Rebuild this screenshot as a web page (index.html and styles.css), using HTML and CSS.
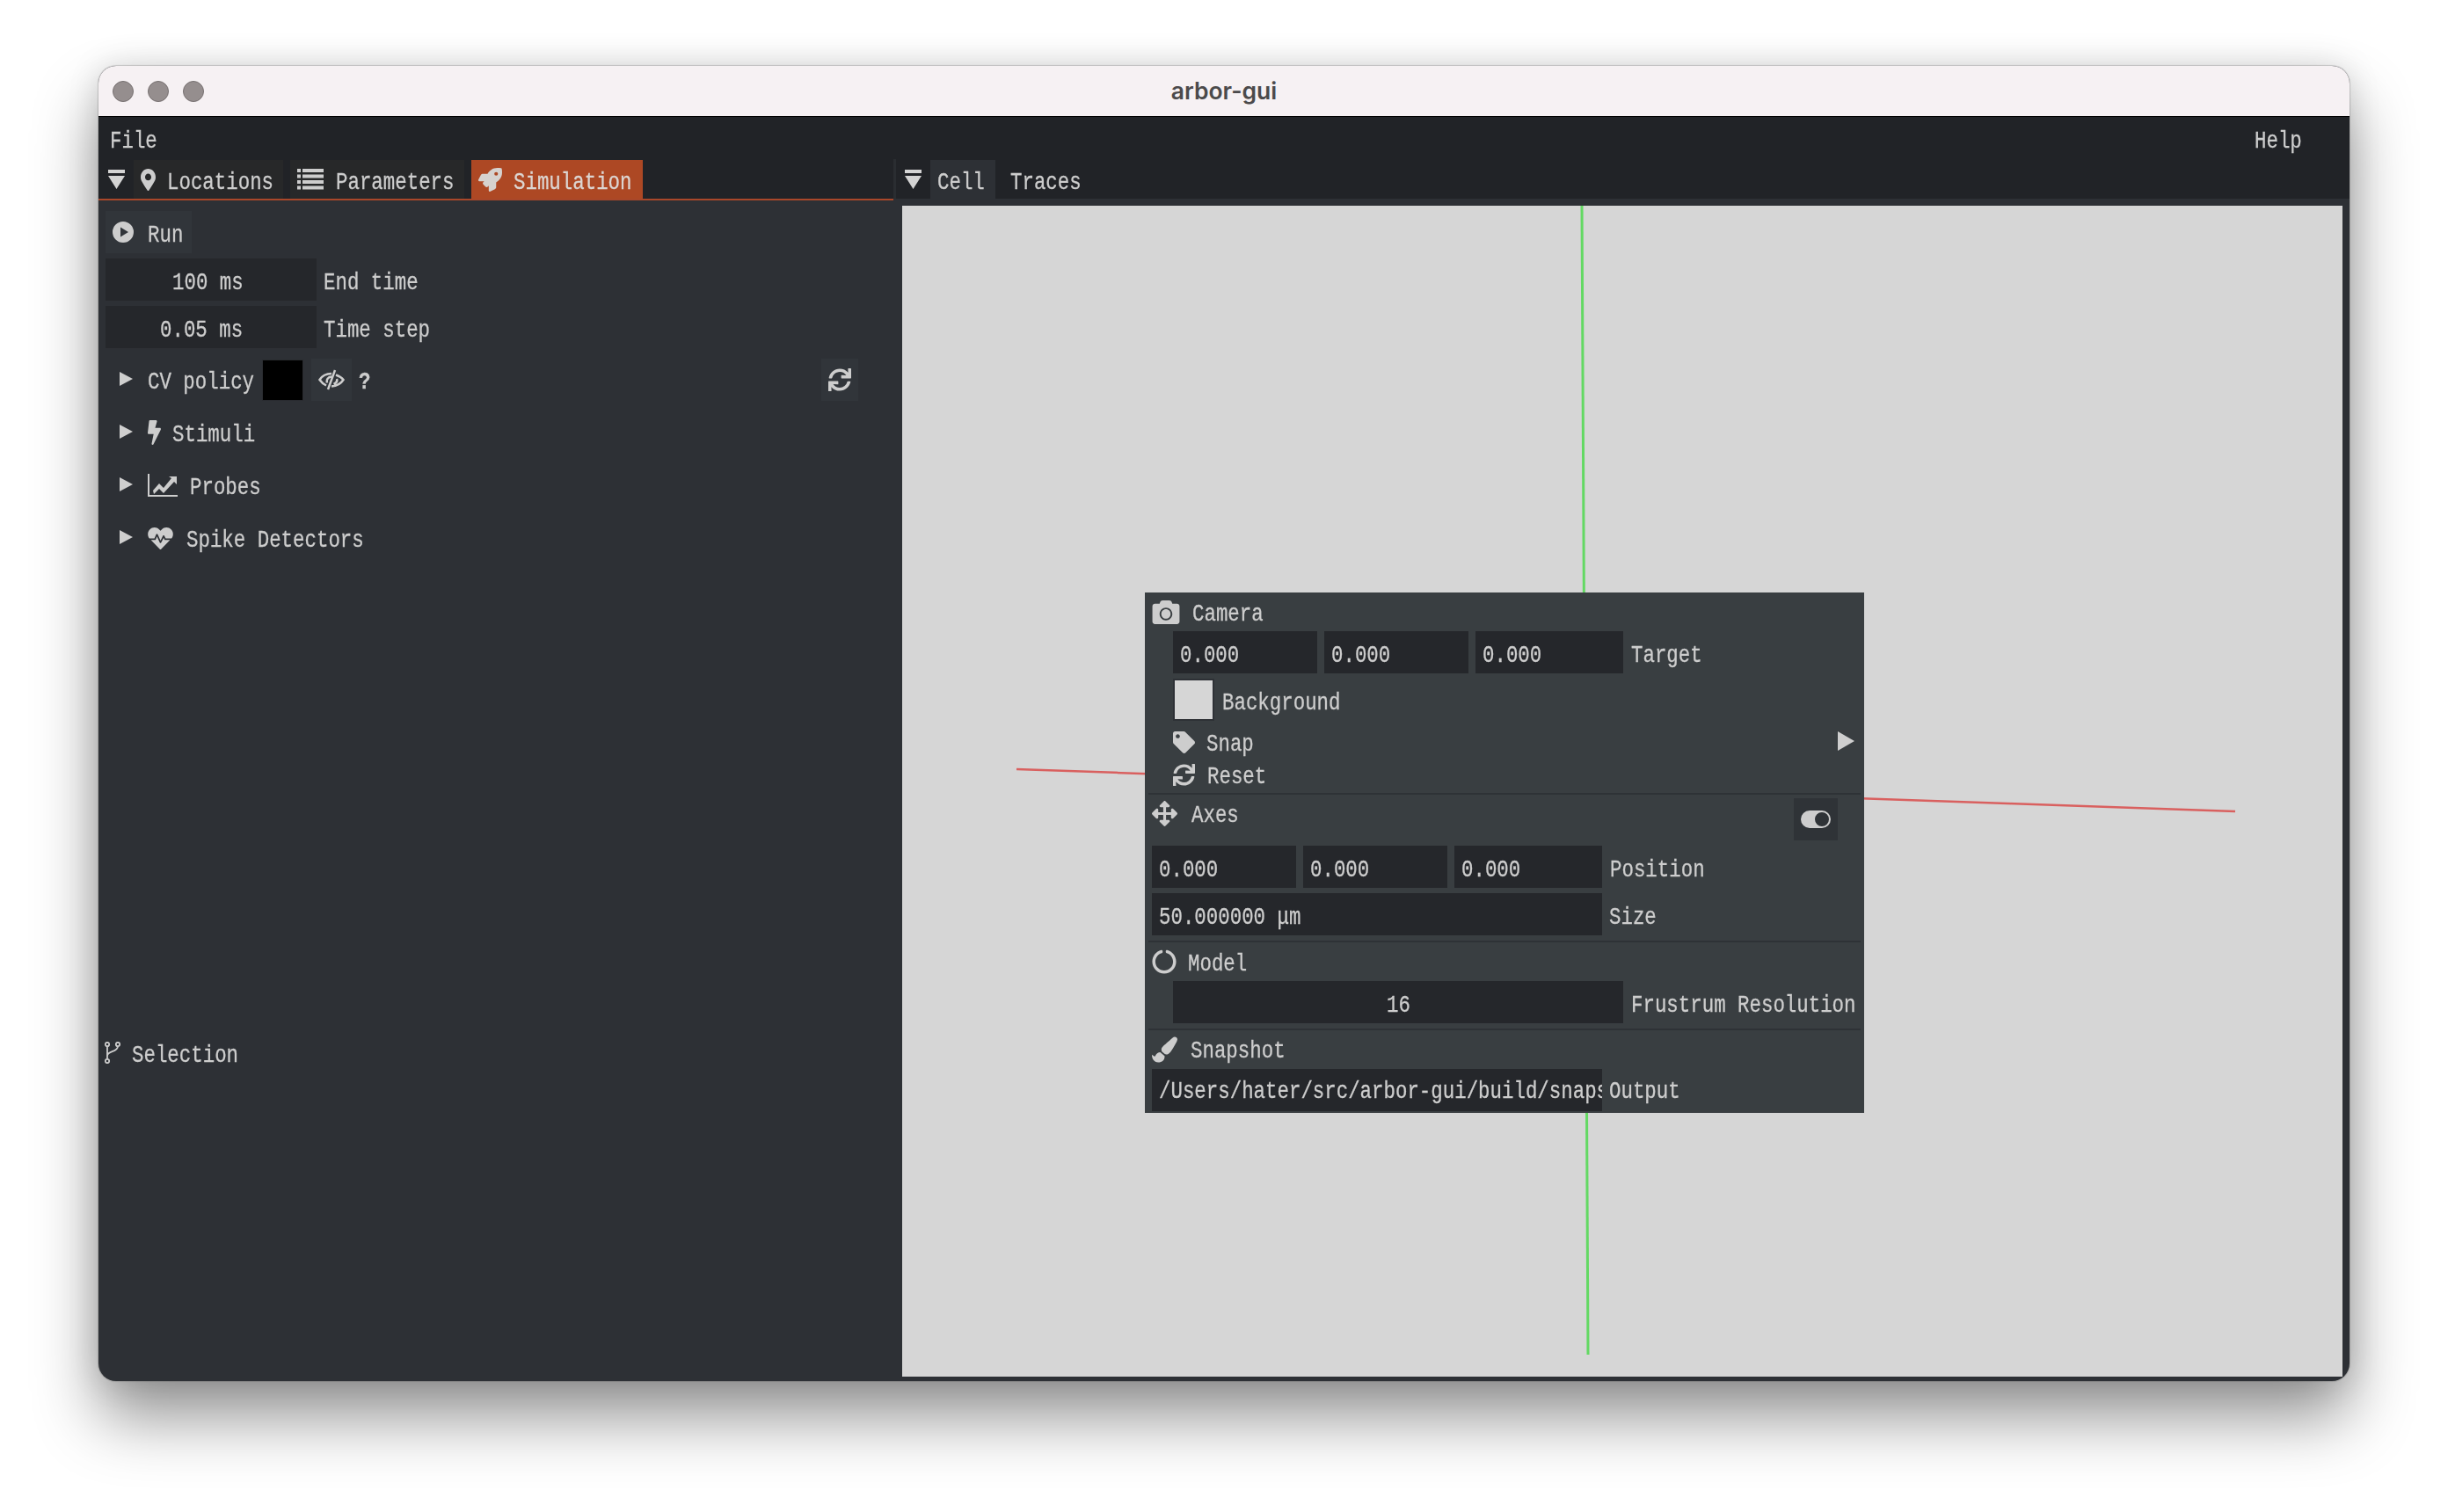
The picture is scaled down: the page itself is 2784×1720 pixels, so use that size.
FILE: index.html
```html
<!DOCTYPE html>
<html lang="en">
<head>
    <meta charset="UTF-8">
    <title>arbor-gui</title>
    <link rel="stylesheet" href="styles.css">
</head>
<body>
    <div class="window">
        <div class="titlebar">
            <div class="lights"><span></span><span></span><span></span></div>
            <div class="title">arbor-gui</div>
        </div>
        <div class="menubar">
            <span class="t">File</span>
            <span class="t help">Help</span>
        </div>
        <div class="panes">
            <div class="left-pane">
                <div class="tabbar left-tabs">
                    <svg class="dock-arrow" viewBox="0 0 19 22"><path d="M0 0h19v4H0zM0 7h19l-9.500 15z"/></svg>
                    <div class="tab tab-locations">
                        <svg class="i-marker" viewBox="0 0 384 512" preserveAspectRatio="none"><path fill-rule="evenodd" d="M172.268 501.67C26.97 291.031 0 268.413 0 192 0 85.961 85.961 0 192 0s192 85.961 192 192c0 76.413-26.97 99.031-172.268 309.67-9.535 13.774-29.93 13.773-39.464 0zM192 272c44.183 0 80-35.817 80-80s-35.817-80-80-80-80 35.817-80 80 35.817 80 80 80z"/></svg>
                        <span class="t">Locations</span>
                    </div>
                    <div class="tab tab-parameters">
                        <svg class="i-list" viewBox="0 0 30 24"><path d="M0 0h4v4H0zM6 0h24v4H6zM0 6.500h4v4H0zM6 6.500h24v4H6zM0 13h4v4H0zM6 13h24v4H6zM0 19.500h4v4H0zM6 19.500h24v4H6z"/></svg>
                        <span class="t">Parameters</span>
                    </div>
                    <div class="tab tab-simulation">
                        <svg class="i-rocket" viewBox="0 0 512 512"><path d="M505.12 19.09c-1.19-5.53-6.66-11-12.21-12.18C460.72 0 435.51 0 410.41 0 307.18 0 245.27 55.2 199.05 128H94.84c-16.35.02-35.56 11.88-42.89 26.48L2.52 253.3A28.400 28.400 0 0 0 0 264a24 24 0 0 0 24 24h103.82l-22.48 22.47c-11.36 11.36-13 32.26 0 45.25l50.91 50.91c11.16 11.19 32.16 13.16 45.28 0l22.47-22.47V488a24 24 0 0 0 24 24 28.560 28.560 0 0 0 10.71-2.52l98.73-49.39c14.63-7.3 26.51-26.5 26.51-42.86V312.8c72.6-46.31 128.03-108.41 128.03-211.1.01-25.2.01-50.4-6.95-82.61zM384.04 168a40 40 0 1 1 40.010-40 40.020 40.020 0 0 1-40.010 40z"/></svg>
                        <span class="t">Simulation</span>
                    </div>
                </div>
                <div class="sim-body">
                    <div class="run-btn">
                        <svg class="i-play" viewBox="0 0 24 24"><path fill-rule="evenodd" d="M12 0a12 12 0 1 1 0 24a12 12 0 1 1 0-24zM9 6.500v11l9-5.500z"/></svg>
                        <span class="t">Run</span>
                    </div>
                    <div class="sim-field">
                        <div class="input input-sim pad-end"><span class="t">100 ms</span></div>
                        <span class="t">End time</span>
                    </div>
                    <div class="sim-field">
                        <div class="input input-sim pad-step"><span class="t">0.05 ms</span></div>
                        <span class="t">Time step</span>
                    </div>
                    <div class="tree-row cv-row">
                        <span class="tri"></span>
                        <span class="cv-label"><span class="t">CV policy</span></span>
                        <span class="swatch-black"></span>
                        <span class="btn btn-eye">
                            <svg class="i-eye" viewBox="0 0 30 24"><path d="M15 5C9 5 4 8 1.500 12c2 3 4.500 5 7.500 6.500M15 8.500c-4 0-6 3.500-5 7M19 1l-8 22M20 6.500c4 1.500 7 3.500 8.500 5.500-2.500 4-7.500 7-13.500 7.500M21 11c1 3-1 5-3.500 6"/></svg>
                        </span>
                        <span class="help-mark"><span class="t">?</span></span>
                        <span class="btn btn-sync">
                            <svg class="i-sync" viewBox="0 0 512 512"><path d="M440.65 12.57l4 82.77A247.160 247.160 0 0 0 255.83 8C134.730 8 33.910 94.920 12.290 209.820A12 12 0 0 0 24.090 224h49.050a12 12 0 0 0 11.670-9.260 175.910 175.910 0 0 1 317-56.940l-101.460-4.860a12 12 0 0 0-12.570 12v47.410a12 12 0 0 0 12 12H500a12 12 0 0 0 12-12V12a12 12 0 0 0-12-12h-47.370a12 12 0 0 0-11.980 12.570zM255.830 432a175.610 175.610 0 0 1-146-77.800l101.800 4.870a12 12 0 0 0 12.570-12v-47.400a12 12 0 0 0-12-12H12a12 12 0 0 0-12 12V500a12 12 0 0 0 12 12h47.350a12 12 0 0 0 12-12.600l-4.150-82.570A247.170 247.170 0 0 0 255.830 504c121.110 0 221.930-86.920 243.550-201.820a12 12 0 0 0-11.800-14.180h-49.050a12 12 0 0 0-11.670 9.260A175.860 175.860 0 0 1 255.830 432z"/></svg>
                        </span>
                    </div>
                    <div class="tree-row">
                        <span class="tri"></span>
                        <svg class="i-bolt" viewBox="0 0 320 512" preserveAspectRatio="none"><path d="M296 160H180.600l42.600-129.800C227.200 15 215.700 0 200 0H56C44 0 33.800 8.900 32.200 20.800l-32 240C-1.700 275.200 9.500 288 24 288h118.700L96.600 482.500c-3.600 15.200 8 29.500 23.300 29.500 8.400 0 16.400-4.400 20.800-12l176-304c9.300-15.900-2.200-36-20.700-36z"/></svg>
                        <span class="t">Stimuli</span>
                    </div>
                    <div class="tree-row">
                        <span class="tri"></span>
                        <svg class="i-chart" viewBox="0 0 34 26"><path d="M0 0h2v24h32v2H0z"/><path d="M6 19l7-8 5 5 9-11-3-2h9v9l-3-3-12 13-5-5-6 6z"/></svg>
                        <span class="t">Probes</span>
                    </div>
                    <div class="tree-row">
                        <span class="tri"></span>
                        <svg class="i-heart" viewBox="0 32 512 448"><path d="M320.200 243.800l-49.700 99.400c-6 12.100-23.400 11.700-28.900-.6l-56.900-126.300-30 71.700H60.600l182.500 186.500c7.100 7.300 18.600 7.300 25.700 0L451.400 288H342.300l-22.100-44.200zM473.700 73.900l-2.400-2.500c-51.500-52.600-135.800-52.600-187.400 0L256 100l-27.900-28.500c-51.500-52.700-135.900-52.700-187.400 0l-2.400 2.400C-10.400 123.700-12.500 203 31 256h102.400l35.900-86.200c5.400-12.900 23.600-13.200 29.400-.4l58.200 129.300 49-97.900c5.900-11.800 22.700-11.800 28.600 0l27.600 55.200H481c43.500-53 41.400-132.300-7.300-182.100z"/></svg>
                        <span class="t">Spike Detectors</span>
                    </div>
                </div>
                <div class="selection">
                    <svg class="i-branch" viewBox="0 0 18 25"><circle cx="3" cy="3" r="2.200"/><circle cx="15" cy="3" r="2.200"/><circle cx="3" cy="22" r="2.200"/><path d="M3 5.200v14.600M15 5.200c0 7-12 5-12 11"/></svg>
                    <span class="t">Selection</span>
                </div>
            </div>
            <div class="right-pane">
                <div class="tabbar right-tabs">
                    <svg class="dock-arrow" viewBox="0 0 19 22"><path d="M0 0h19v4H0zM0 7h19l-9.500 15z"/></svg>
                    <div class="tab tab-cell"><span class="t">Cell</span></div>
                    <div class="tab tab-traces"><span class="t">Traces</span></div>
                </div>
                <div class="viewport">
                    <svg class="axes" viewBox="0 0 1638 1332">
                        <line x1="130" y1="641" x2="1516" y2="689" stroke="#d9605f" stroke-width="2.500"/>
                        <line x1="773" y1="0" x2="780" y2="1307" stroke="#63d963" stroke-width="3"/>
                    </svg>
                    <div class="camera-panel">
                        <div class="p-head head-camera">
                            <svg class="i-camera" viewBox="0 32 512 448"><path fill-rule="evenodd" d="M512 144v288c0 26.500-21.500 48-48 48H48c-26.500 0-48-21.500-48-48V144c0-26.500 21.500-48 48-48h88l12.300-32.900c7-18.700 24.900-31.100 44.900-31.100h125.500c20 0 37.900 12.400 44.900 31.100L376 96h88c26.500 0 48 21.500 48 48zM376 288c0-66.200-53.800-120-120-120s-120 53.800-120 120 53.800 120 120 120 120-53.800 120-120zm-32 0c0 48.500-39.500 88-88 88s-88-39.500-88-88 39.500-88 88-88 88 39.500 88 88z"/></svg>
                            <span class="t">Camera</span>
                        </div>
                        <div class="p-row indent">
                            <div class="input num"><span class="t">0.000</span></div>
                            <div class="input num"><span class="t">0.000</span></div>
                            <div class="input num wide"><span class="t">0.000</span></div>
                            <span class="t">Target</span>
                        </div>
                        <div class="p-row indent bg-row">
                            <span class="swatch-bg"></span>
                            <span class="t">Background</span>
                        </div>
                        <div class="menu-row snap-row">
                            <svg class="i-tag" viewBox="0 0 512 512"><path fill-rule="evenodd" d="M0 252.118V48C0 21.490 21.490 0 48 0h204.118a48 48 0 0 1 33.941 14.059l211.882 211.882c18.745 18.745 18.745 49.137 0 67.882L293.823 497.941c-18.745 18.745-49.137 18.745-67.882 0L14.059 286.059A48 48 0 0 1 0 252.118zM112 64c-26.510 0-48 21.490-48 48s21.490 48 48 48 48-21.490 48-48-21.490-48-48-48z"/></svg>
                            <span class="t">Snap</span>
                            <span class="tri tri-snap"></span>
                        </div>
                        <div class="menu-row reset-row">
                            <svg class="i-reset" viewBox="0 0 512 512"><path d="M440.65 12.57l4 82.77A247.160 247.160 0 0 0 255.83 8C134.730 8 33.910 94.920 12.290 209.820A12 12 0 0 0 24.090 224h49.050a12 12 0 0 0 11.670-9.260 175.910 175.910 0 0 1 317-56.940l-101.460-4.860a12 12 0 0 0-12.570 12v47.410a12 12 0 0 0 12 12H500a12 12 0 0 0 12-12V12a12 12 0 0 0-12-12h-47.370a12 12 0 0 0-11.980 12.570zM255.830 432a175.610 175.610 0 0 1-146-77.800l101.800 4.870a12 12 0 0 0 12.570-12v-47.400a12 12 0 0 0-12-12H12a12 12 0 0 0-12 12V500a12 12 0 0 0 12 12h47.350a12 12 0 0 0 12-12.600l-4.150-82.570A247.170 247.170 0 0 0 255.830 504c121.110 0 221.930-86.920 243.550-201.820a12 12 0 0 0-11.800-14.180h-49.050a12 12 0 0 0-11.670 9.260A175.860 175.860 0 0 1 255.830 432z"/></svg>
                            <span class="t">Reset</span>
                        </div>
                        <div class="sep"></div>
                        <div class="p-head head-axes">
                            <svg class="i-move" viewBox="0 0 512 512"><path d="M352.201 425.775l-79.196 79.196c-9.373 9.373-24.568 9.373-33.941 0l-79.196-79.196c-15.119-15.119-4.411-40.971 16.971-40.970h51.162L228 284H127.196v51.162c0 21.382-25.851 32.090-40.971 16.971L7.029 272.937c-9.373-9.373-9.373-24.569 0-33.941L86.225 159.800c15.119-15.119 40.971-4.411 40.971 16.971V228H228V127.196h-51.230c-21.382 0-32.090-25.851-16.971-40.971l79.196-79.196c9.373-9.373 24.568-9.373 33.941 0l79.196 79.196c15.119 15.119 4.411 40.971-16.971 40.971h-51.162V228h100.804v-51.162c0-21.382 25.851-32.090 40.970-16.971l79.196 79.196c9.373 9.373 9.373 24.569 0 33.941L425.773 352.200c-15.119 15.119-40.971 4.411-40.970-16.971V284H284v100.804h51.230c21.382 0 32.090 25.851 16.971 40.971z"/></svg>
                            <span class="t">Axes</span>
                            <span class="toggle-btn">
                                <svg class="i-toggle" viewBox="0 0 34 20"><path fill-rule="evenodd" d="M10 0h14a10 10 0 0 1 0 20H10a10 10 0 0 1 0-20zM24 2a8 8 0 1 0 0 16a8 8 0 1 0 0-16z"/></svg>
                            </span>
                        </div>
                        <div class="p-row">
                            <div class="input num"><span class="t">0.000</span></div>
                            <div class="input num"><span class="t">0.000</span></div>
                            <div class="input num wide"><span class="t">0.000</span></div>
                            <span class="t">Position</span>
                        </div>
                        <div class="p-row gap-top">
                            <div class="input full"><span class="t">50.000000 μm</span></div>
                            <span class="t">Size</span>
                        </div>
                        <div class="sep sep-after"></div>
                        <div class="p-head head-model">
                            <svg class="i-notch" viewBox="0 0 512 512"><path d="M288 39.056v16.659c0 10.804 7.281 20.159 17.686 23.066C383.204 100.434 440 171.518 440 256c0 101.689-82.295 184-184 184-101.689 0-184-82.295-184-184 0-84.470 56.786-155.564 134.312-177.219C216.719 75.874 224 66.517 224 55.712V39.064c0-15.709-14.834-27.153-30.046-23.234C86.603 43.482 7.394 141.206 8.003 257.332c.72 137.052 111.477 246.956 248.531 246.667C393.255 503.711 504 392.788 504 256c0-115.633-79.140-212.779-186.211-240.236C302.678 11.889 288 23.456 288 39.056z"/></svg>
                            <span class="t">Model</span>
                        </div>
                        <div class="p-row indent">
                            <div class="input full res"><span class="t">16</span></div>
                            <span class="t">Frustrum Resolution</span>
                        </div>
                        <div class="sep sep-after"></div>
                        <div class="p-head head-snapshot">
                            <svg class="i-brush" viewBox="0 0 512 512"><path d="M167.020 309.340c-40.120 2.580-76.530 17.860-97.190 72.300-2.350 6.210-8 9.980-14.590 9.980-11.110 0-45.460-27.670-55.250-34.350C0 439.620 37.930 512 128 512c75.860 0 128-43.770 128-120.190 0-3.110-.65-6.080-.97-9.130l-88.010-73.340zM457.890 0c-15.160 0-29.370 6.710-40.210 16.450C213.270 199.050 192 203.340 192 257.090c0 13.700 3.250 26.760 8.730 38.700l63.820 53.180c7.210 1.800 14.640 3.030 22.390 3.030 62.110 0 98.110-45.470 211.160-256.460 7.380-14.350 13.900-29.850 13.900-45.990C512 20.640 486 0 457.890 0z"/></svg>
                            <span class="t">Snapshot</span>
                        </div>
                        <div class="p-row output-row">
                            <div class="input full"><span class="t">/Users/hater/src/arbor-gui/build/snaps</span></div>
                            <span class="t">Output</span>
                        </div>
                    </div>
                </div>
            </div>
        </div>
    </div>
</body>
</html>
```

FILE: styles.css
```css
html, body {
    margin: 0;
    background-color: #ffffff;
}
body {
    width: 2784px;
    height: 1720px;
    padding: 75px 112px 0;
    box-sizing: border-box;
    overflow: hidden;
}
.window {
    width: 2560px;
    height: 1496px;
    border-radius: 20px;
    overflow: hidden;
    display: flex;
    flex-direction: column;
    background-color: #2d3035;
    box-shadow: 0 42px 72px rgba(0, 0, 0, 0.42), 0 0 36px rgba(0, 0, 0, 0.13), 0 0 1px 1px rgba(0, 0, 0, 0.16);
    font-family: "Liberation Mono", monospace;
    font-size: 27px;
    color: #cdcdcd;
}
.window svg {
    filter: blur(0.5px);
}

/* the narrow mono text of the app: glyphs squeezed, no width of their own */
.t {
    display: block;
    width: 0;
    line-height: 32px;
    white-space: nowrap;
    transform: translateY(3px) scaleX(0.83);
    transform-origin: 0 50%;
    flex: none;
    filter: blur(0.5px);
    -webkit-text-stroke: 0.3px;
}
.tab .t,
.run-btn .t,
.sim-field .t,
.p-row .t {
    transform: translateY(4px) scaleX(0.83);
}
.head-snapshot .t,
.output-row .t {
    transform: translateY(1.500px) scaleX(0.83);
}

/* title bar */
.titlebar {
    height: 57px;
    flex: none;
    display: flex;
    align-items: center;
    position: relative;
    background-color: #f6f1f3;
    border-bottom: 1px solid #000;
}
.lights {
    display: flex;
    gap: 16px;
    margin-left: 16px;
}
.lights span {
    width: 24px;
    height: 24px;
    box-sizing: border-box;
    border-radius: 50%;
    background-color: #958e8e;
    border: 1px solid #777171;
}
.title {
    position: absolute;
    left: 0;
    right: 0;
    text-align: center;
    font-family: Inter, sans-serif;
    font-weight: 600;
    font-size: 26.500px;
    line-height: 53px;
    color: #4b4a4b;
}

/* menu */
.menubar {
    height: 48px;
    flex: none;
    display: flex;
    align-items: center;
    justify-content: space-between;
    padding: 2px 53px 0 13px;
    box-sizing: border-box;
    background-color: #212327;
}
.help {
    width: 55px;
}

/* docked panes */
.panes {
    flex: 1;
    display: flex;
    min-height: 0;
}
.left-pane {
    width: 904px;
    flex: none;
    display: flex;
    flex-direction: column;
}
.right-pane {
    flex: 1;
    display: flex;
    flex-direction: column;
}
.tabbar {
    height: 47px;
    flex: none;
    display: flex;
    align-items: flex-end;
    box-sizing: border-box;
    background-color: #212327;
}
.left-tabs {
    border-bottom: 2px solid #a9472a;
    padding-left: 11px;
}
.right-tabs {
    height: 45px;
    padding-left: 10px;
    border-left: 3px solid #2a2d31;
    background-color: #212327;
}
.dock-arrow {
    width: 19px;
    height: 22px;
    fill: #d4d4d4;
    align-self: flex-start;
    margin-top: 12px;
}
.tab {
    height: 44px;
    display: flex;
    align-items: center;
    box-sizing: border-box;
    background-color: #272829;
}
.tab-locations {
    width: 170px;
    margin-left: 10px;
    padding-left: 8px;
}
.tab-parameters {
    width: 198px;
    margin-left: 8px;
    padding-left: 8px;
}
.tab-simulation {
    width: 195px;
    margin-left: 8px;
    padding-left: 8px;
    background-color: #ad4824;
    color: #dcd5d1;
}
.tab-cell {
    width: 74px;
    margin-left: 10px;
    padding-left: 8px;
    background-color: #2d3035;
}
.tab-traces {
    padding-left: 17px;
    background: none;
}
.i-marker { width: 17px; height: 25px; margin-right: 13px; fill: #cdcdcd; }
.i-list { width: 30px; height: 24px; margin-right: 14px; fill: #cdcdcd; }
.i-rocket { width: 27px; height: 27px; margin-right: 13px; fill: #d6d2cf; }

/* simulation panel */
.sim-body {
    flex: 1;
    padding: 12px 0 0 8px;
    display: flex;
    flex-direction: column;
    align-items: flex-start;
}
.run-btn {
    width: 98px;
    height: 48px;
    display: flex;
    align-items: center;
    padding-left: 8px;
    box-sizing: border-box;
    background-color: #31353a;
}
.i-play { width: 24px; height: 24px; margin-right: 16px; fill: #cdcdcd; }
.sim-field {
    margin-top: 6px;
    display: flex;
    align-items: center;
    gap: 8px;
}
.input {
    height: 48px;
    display: flex;
    align-items: center;
    box-sizing: border-box;
    overflow: hidden;
    background-color: #25272b;
    flex: none;
}
.input-sim { width: 240px; }
.pad-end { padding-left: 76px; }
.pad-step { padding-left: 62px; }
.tree-row {
    width: 856px;
    height: 48px;
    margin-top: 12px;
    padding-left: 16px;
    display: flex;
    align-items: center;
    box-sizing: border-box;
}
.tri {
    width: 0;
    height: 0;
    flex: none;
    border-left: 15px solid #cfcfcf;
    border-top: 8px solid transparent;
    border-bottom: 8px solid transparent;
    margin: -3px 17px 0 0;
}
.cv-label { width: 131px; flex: none; }
.swatch-black {
    width: 45px;
    height: 45px;
    flex: none;
    background-color: #000;
    box-shadow: 0 0 0 1px #292b2f;
}
.btn {
    width: 46px;
    height: 48px;
    flex: none;
    display: flex;
    align-items: center;
    justify-content: center;
    background-color: #31353a;
}
.btn-eye { margin-left: 10px; }
.i-eye {
    width: 30px;
    height: 24px;
    fill: none;
    stroke: #cdcdcd;
    stroke-width: 2.500;
}
.help-mark {
    width: 16px;
    margin-left: 8px;
    font-weight: 700;
}
.btn-sync { width: 42px; margin-left: auto; }
.i-sync { width: 26px; height: 26px; fill: #cdcdcd; }
.i-bolt { width: 15px; height: 28px; margin-right: 13px; fill: #cdcdcd; }
.i-chart { width: 34px; height: 26px; margin-right: 14px; fill: #cdcdcd; }
.i-heart { width: 29px; height: 25px; margin-right: 15px; fill: #cdcdcd; }
.selection {
    height: 397px;
    flex: none;
    display: flex;
    align-items: center;
    align-self: stretch;
    box-sizing: border-box;
    padding: 0 0 350px 7px;
}
.i-branch {
    width: 18px;
    height: 25px;
    margin-right: 13px;
    fill: none;
    stroke: #cdcdcd;
    stroke-width: 1.800;
}

/* 3d view */
.viewport {
    flex: 1;
    position: relative;
    margin: 8px 8px 5px 10px;
    background-color: #d6d6d6;
}
.axes {
    position: absolute;
    left: 0;
    top: 0;
    width: 100%;
    height: 100%;
}
.camera-panel {
    position: absolute;
    left: 276px;
    top: 440px;
    width: 818px;
    height: 592px;
    background-color: #393e41;
}
.p-head {
    height: 44px;
    display: flex;
    align-items: center;
    padding-left: 8px;
}
.p-row {
    height: 48px;
    display: flex;
    align-items: center;
    gap: 8px;
    padding-left: 8px;
}
.indent { padding-left: 32px; }
.gap-top { margin-top: 6px; }
.bg-row { margin-top: 6px; gap: 9px; }
.num {
    width: 164px;
    padding-left: 8px;
}
.wide { width: 168px; margin-right: 1px; }
.full {
    width: 512px;
    padding-left: 8px;
}
.res { padding-left: 243px; margin-right: 1px; }
.swatch-bg {
    width: 47px;
    height: 48px;
    flex: none;
    box-sizing: border-box;
    background-color: #d6d6d6;
    border: 2px solid #2e3136;
}
.menu-row {
    display: flex;
    align-items: center;
    padding-left: 32px;
}
.snap-row { height: 40px; margin-top: 4px; position: relative; }
.reset-row { height: 34px; }
.tri-snap {
    position: absolute;
    left: 788px;
    top: 8px;
    margin: 0;
    border-left-width: 19px;
    border-top-width: 11px;
    border-bottom-width: 11px;
}
.i-tag { width: 25px; height: 25px; margin-right: 13px; fill: #cdcdcd; }
.i-reset { width: 25px; height: 25px; margin-right: 14px; fill: #cdcdcd; }
.sep {
    height: 2px;
    margin: 4px 4px 0;
    background-color: #2e3236;
}
.sep-after { margin-top: 6px; }
.i-camera { width: 32px; height: 27px; margin-right: 14px; fill: #cdcdcd; }
.head-axes {
    height: 58px;
    position: relative;
    padding-bottom: 16px;
    box-sizing: border-box;
}
.i-move { width: 29px; height: 29px; margin-right: 16px; fill: #cdcdcd; }
.toggle-btn {
    position: absolute;
    left: 738px;
    top: 4px;
    width: 50px;
    height: 48px;
    display: flex;
    align-items: center;
    justify-content: center;
    background-color: #2f3337;
}
.i-toggle { width: 34px; height: 20px; fill: #cdcdcd; }
.i-notch { width: 28px; height: 28px; margin-right: 13px; fill: #cdcdcd; }
.i-brush { width: 29px; height: 30px; margin-right: 15px; fill: #cdcdcd; }
```
